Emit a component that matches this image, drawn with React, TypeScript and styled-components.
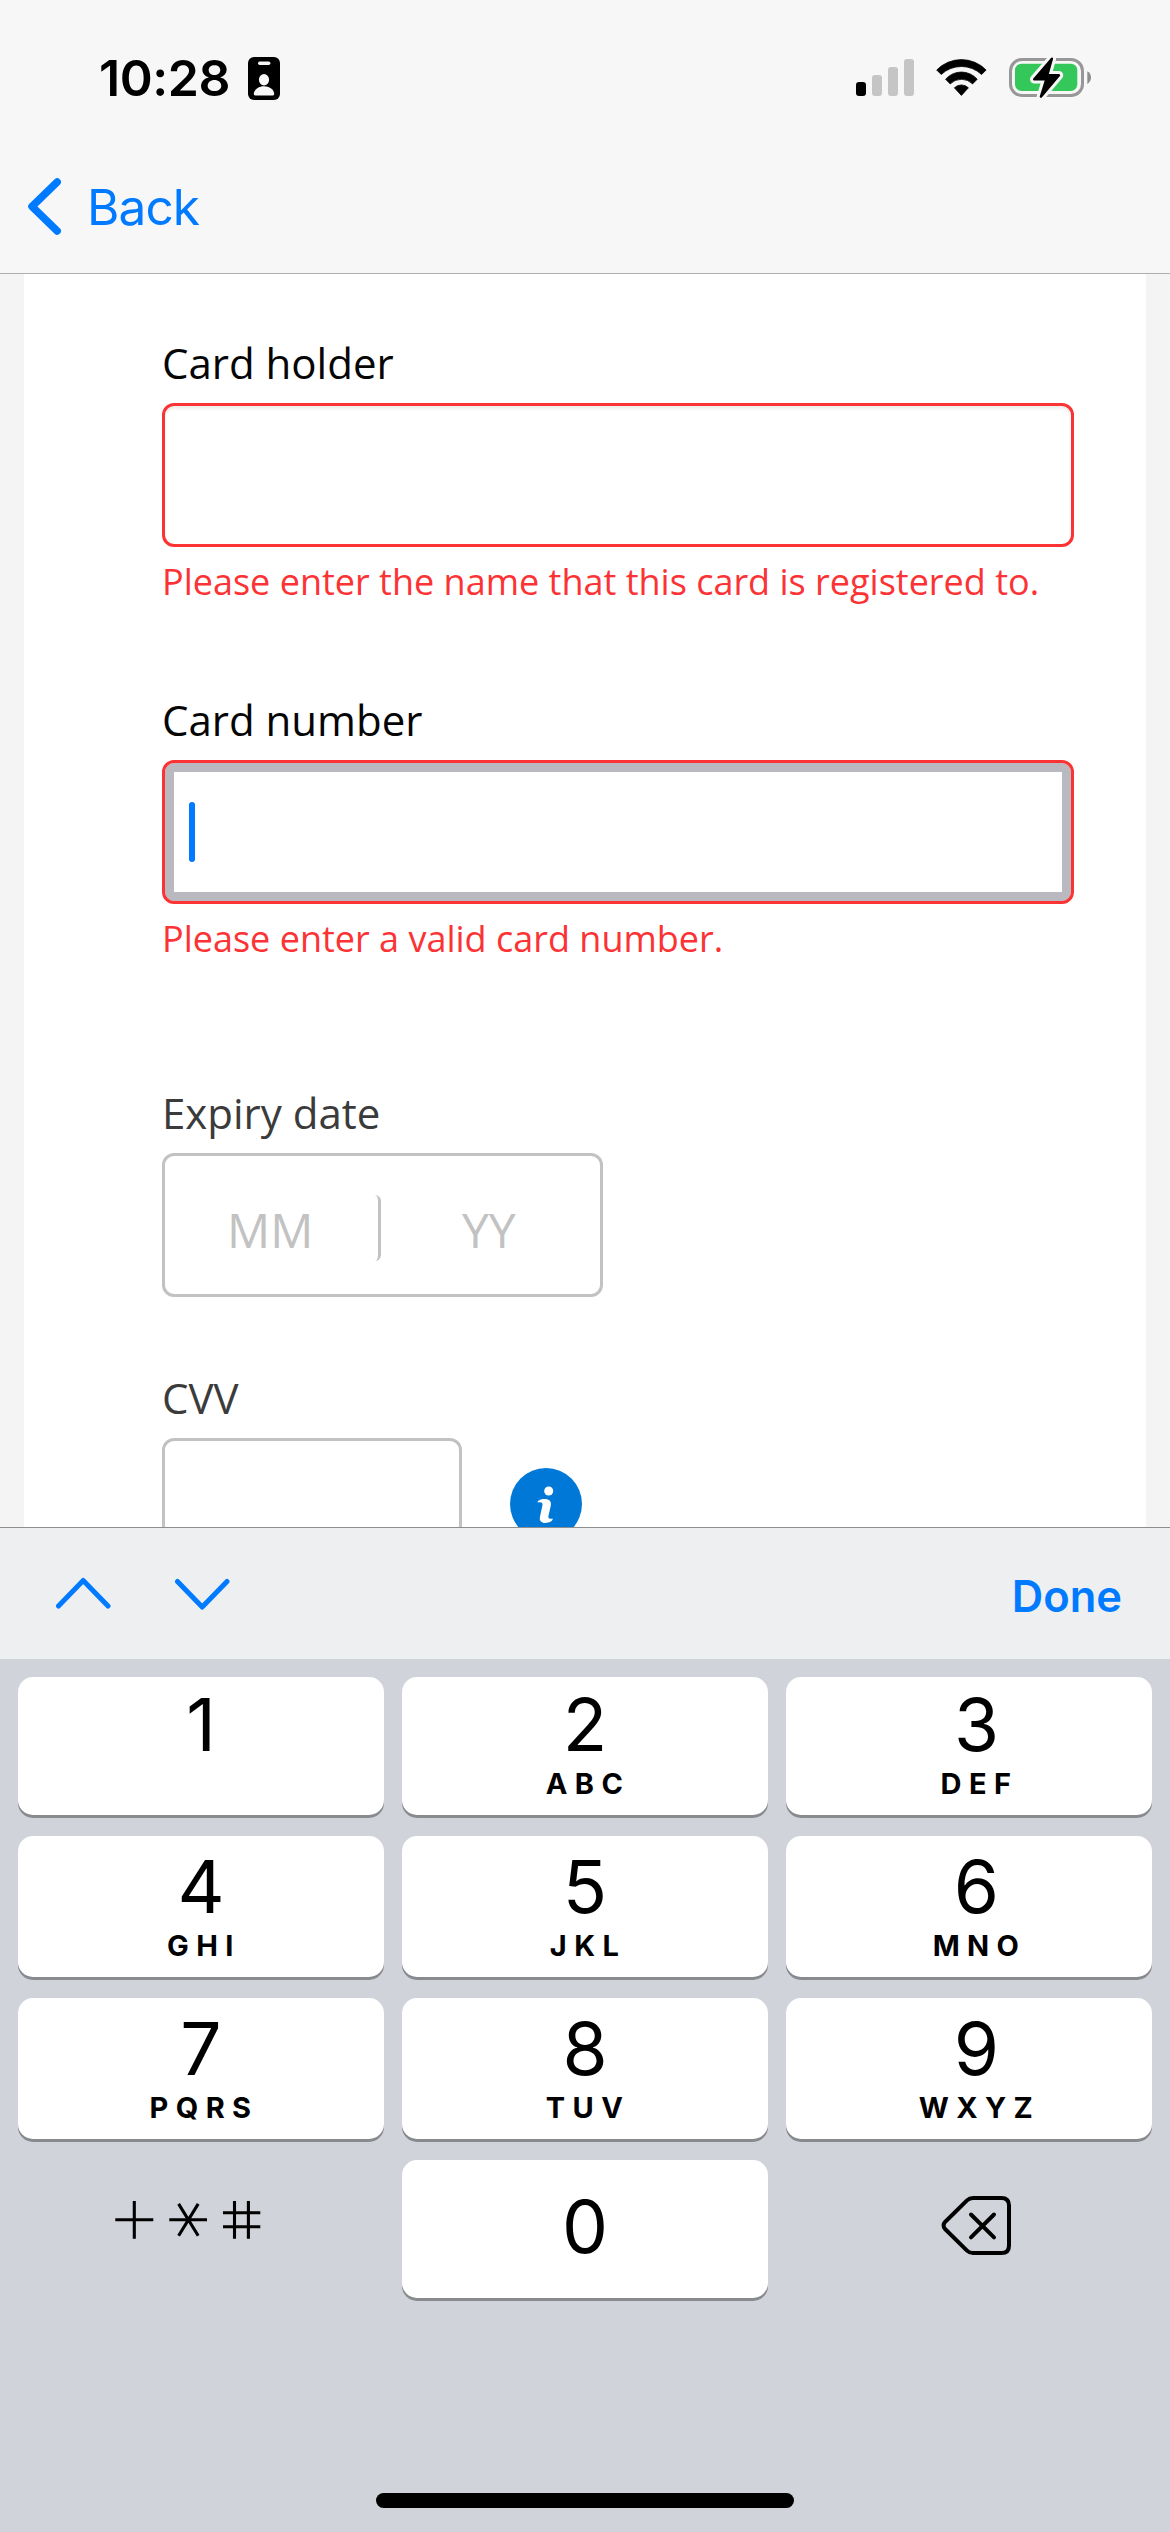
import React from "react";
import styled, { createGlobalStyle } from "styled-components";

const blue = "#007aff";
const red = "#fb3335";
const grey = "#c2c2c2";
const ui = `Inter, Roboto, "Liberation Sans", sans-serif`;

const GlobalStyle = createGlobalStyle`
  * { box-sizing: border-box; }
  html, body { margin: 0; padding: 0; background: #d0d3da; }
  button { border: 0; padding: 0; margin: 0; background: none; font: inherit; color: inherit; }
`;

const Screen = styled.div`
  width: 1170px;
  height: 2532px;
  display: flex;
  flex-direction: column;
  overflow: hidden;
  font-family: ${ui};
  background: #f4f4f4;
`;

const Header = styled.header`
  height: 274px;
  flex: none;
  background: #f7f7f7;
  border-bottom: 1px solid #aeaeaf;
`;

const StatusBar = styled.div`
  display: flex;
  align-items: center;
  height: 108px;
  padding: 48px 79px 0 99px;
`;

const Time = styled.span`
  width: 149px;
  font-size: 50px;
  line-height: 60px;
  font-weight: 600;
  letter-spacing: -0.4px;
  white-space: nowrap;
  color: #000;
`;

const StatusIcons = styled.div`
  display: flex;
  gap: 22px;
  margin-left: auto;
`;

const Icon = styled.svg`
  display: block;
  flex: none;
`;

const NavBar = styled.nav`
  padding: 69px 28px 0;
`;

const BackButton = styled.button`
  display: flex;
  align-items: center;
  gap: 26px;
  font-size: 49.5px;
  line-height: 60px;
  letter-spacing: -0.9px;
  color: ${blue};
`;

const Viewport = styled.main`
  height: 1253px;
  flex: none;
  overflow: hidden;
  padding: 0 24px;
`;

const Sheet = styled.form`
  height: 1400px;
  padding: 61px 72px 0 138px;
  background: #fff;
  font-family: "Open Sans", "Noto Sans", sans-serif;
`;

const Field = styled.div<{ $after: number }>`
  margin-bottom: ${(p) => p.$after}px;
`;

const Label = styled.label<{ $muted?: boolean }>`
  display: block;
  margin-bottom: 12px;
  font-size: 42px;
  line-height: 56px;
  color: ${(p) => (p.$muted ? "#3b3b3b" : "#050505")};
`;

const Box = styled.div<{ $w?: number; $error?: boolean; $focus?: boolean }>`
  display: flex;
  width: ${(p) => (p.$w ? `${p.$w}px` : "100%")};
  height: 144px;
  border: 3px solid ${(p) => (p.$error ? red : grey)};
  border-radius: 12px;
  background: #fff;
  box-shadow: ${(p) =>
    p.$focus
      ? "inset 0 0 0 9px #bbb9c0"
      : p.$error
      ? "inset 0 3px 3px rgba(0, 0, 0, 0.07)"
      : "none"};
`;

const Caret = styled.span`
  width: 6px;
  height: 60px;
  margin: 39px 0 0 24px;
  border-radius: 3px;
  background: ${blue};
`;

const ErrorText = styled.p`
  margin: 11px 0 0;
  font-size: 36px;
  line-height: 48px;
  white-space: nowrap;
  color: ${red};
`;

const DatePart = styled.span<{ $divider?: boolean }>`
  flex: none;
  width: ${(p) => (p.$divider ? 156 : 120)}px;
  height: 66px;
  margin: 39px 0 0 ${(p) => (p.$divider ? 60 : 79)}px;
  padding-left: 2px;
  border-right: ${(p) => (p.$divider ? `3px solid ${grey}` : "0")};
  border-radius: 6px;
  font-size: 48px;
  line-height: 69px;
  color: ${grey};
`;

const CvvRow = styled.div`
  display: flex;
  align-items: flex-start;
  gap: 48px;
`;

const InfoButton = styled.button`
  margin-top: 30px;
`;

const Accessory = styled.div`
  height: 132px;
  flex: none;
  display: flex;
  align-items: center;
  padding: 0 48px 2px 56px;
  gap: 64px;
  border-top: 1px solid #8d8e91;
  background: #eeeff1;
`;

const DoneButton = styled.button`
  margin: 6px 0 0 auto;
  font-size: 43.5px;
  line-height: 54px;
  font-weight: 600;
  color: ${blue};
`;

const Keyboard = styled.section`
  flex: 1;
  display: flex;
  flex-direction: column;
  align-items: center;
  justify-content: space-between;
  padding: 18px 18px 24px;
  background: #d0d3da;
`;

const Keys = styled.div`
  display: grid;
  grid-template-columns: repeat(3, 366px);
  grid-template-rows: 138px 141px 141px 138px;
  gap: 21px 18px;
`;

const Key = styled.button<{ $top: number; $shift?: boolean; $plain?: boolean }>`
  display: flex;
  flex-direction: column;
  align-items: center;
  justify-content: flex-start;
  padding: ${(p) => p.$top}px 0 0 ${(p) => (p.$shift ? 15 : 0)}px;
  border-radius: 15px;
  background: ${(p) => (p.$plain ? "transparent" : "#fff")};
  box-shadow: ${(p) => (p.$plain ? "none" : "0 3px 0 #898a8e")};
  color: #000;
`;

const Digit = styled.span`
  font-size: 73px;
  line-height: 72px;
`;

const Letters = styled.span`
  height: 30px;
  margin-top: 8px;
  padding-left: 6px;
  font-size: 29px;
  line-height: 30px;
  font-weight: 700;
  letter-spacing: 7.4px;
`;

const HomeBar = styled.div`
  width: 418px;
  height: 15px;
  border-radius: 8px;
  background: #000;
`;

const BadgeIcon = () => (
  <Icon width="32" height="60" viewBox="248 48 32 60">
    <rect x="248" y="57" width="32" height="43" rx="6" fill="#000" />
    <rect x="258" y="61.5" width="12.4" height="3.4" rx="1.7" fill="#f7f7f7" />
    <ellipse cx="264" cy="79.7" rx="5.1" ry="5.7" fill="#f7f7f7" />
    <path d="M253.8 93.6c.6-4.4 5-7.3 10.2-7.3s9.600 2.900 10.200 7.300c.1 1.200-.6 2-1.700 2h-17c-1.100 0-1.800-.8-1.700-2z" fill="#f7f7f7" />
  </Icon>
);

const SignalIcon = () => (
  <Icon width="58" height="60" viewBox="856 48 58 60">
    <rect x="856" y="82" width="10" height="14" rx="3" fill="#000" />
    <rect x="872" y="75" width="10" height="21" rx="3" fill="#c5c5c5" />
    <rect x="888" y="67" width="10" height="29" rx="3" fill="#c5c5c5" />
    <rect x="904" y="59" width="10" height="37" rx="3" fill="#c5c5c5" />
  </Icon>
);

const WifiIcon = () => (
  <Icon width="51" height="60" viewBox="936 48 51 60">
    <g stroke="#000" strokeWidth="0.8" strokeLinejoin="round">
      <path d="M936.7 70A34.500 34.500 0 0 1 986.100 70L981.600 74.500A29.500 29.500 0 0 0 941.200 74.500Z" />
      <path d="M945.600 79.200A21 21 0 0 1 977.200 79.200L972.600 83.900A15.800 15.800 0 0 0 950.200 83.900Z" />
      <path d="M954.400 87.800A10 10 0 0 1 968.400 87.800L961.400 95.400Z" />
    </g>
  </Icon>
);

const BatteryIcon = () => (
  <Icon width="82" height="60" viewBox="1009 48 82 60">
    <rect x="1010.500" y="59.500" width="72" height="36" rx="11.500" fill="none" stroke="#979797" strokeWidth="3" />
    <path d="M1087.300 71.300c2.300 1 3.700 3.500 3.700 6.300s-1.400 5.300-3.700 6.300z" fill="#8d8d8d" />
    <rect x="1015" y="63.700" width="62.300" height="27.300" rx="6.500" fill="#34c759" />
    <path
      d="M1051.900 58.700L1034.200 79.300H1046.300L1040.900 96.700L1059 75.300H1047.200Z"
      fill="#f7f7f7"
      stroke="#f7f7f7"
      strokeWidth="8.500"
      strokeLinejoin="round"
    />
    <path
      d="M1051.900 58.700L1034.200 79.300H1046.300L1040.900 96.700L1059 75.300H1047.200Z"
      fill="#000"
      stroke="#000"
      strokeWidth="2.400"
      strokeLinejoin="round"
    />
  </Icon>
);

const Chevron = ({ w, h, d, stroke }: { w: number; h: number; d: string; stroke: number }) => (
  <Icon width={w} height={h} viewBox={`0 0 ${w} ${h}`} fill="none" stroke={blue} strokeWidth={stroke} strokeLinecap="round" strokeLinejoin="round">
    <path d={d} />
  </Icon>
);

const InfoIcon = () => (
  <Icon width="72" height="72" viewBox="510 1468 72 72">
    <circle cx="546" cy="1504" r="36" fill="#0078d7" />
    <circle cx="548.700" cy="1491" r="4.500" fill="#fff" />
    <path
      d="M537.500 1502.500C537.700 1500.500 541 1499 544.500 1499C549.500 1499 551.600 1501.500 550.800 1505.500L548.400 1516.300C548 1518.500 549.200 1519.200 552.800 1518.600C552.500 1521.500 549.200 1523 545.300 1523C541.200 1523 539.200 1520.600 539.900 1517L542.400 1505.500C542.900 1502.700 541.800 1501.800 537.500 1502.500Z"
      fill="#fff"
    />
  </Icon>
);

const SymbolsIcon = () => (
  <Icon width="366" height="138" viewBox="18 2160 366 138" fill="none" stroke="#000" strokeWidth="3.100">
    <path d="M115.300 2219.700H153.300M134.300 2201V2238.700" />
    <path d="M169.300 2219.700H207M178.600 2203.900L198.200 2235.700M198.200 2203.900L178.600 2235.700" />
    <path d="M223 2212.700H260.300M223 2226.700H260.300M234.500 2201V2238.700M248.400 2201V2238.700" />
  </Icon>
);

const BackspaceIcon = () => (
  <Icon width="366" height="138" viewBox="786 2160 366 138" fill="none" stroke="#000" strokeWidth="4" strokeLinecap="round" strokeLinejoin="round">
    <path d="M973 2198H1001.500Q1009 2198 1009 2205.500V2245.500Q1009 2253 1001.500 2253H973Q969.500 2253 967 2250.600L945.300 2229.300Q941.800 2225.500 945.300 2221.700L967 2200.400Q969.500 2198 973 2198Z" />
    <path d="M971 2214.500L994 2237.300M994 2214.500L971 2237.300" />
  </Icon>
);

const keys = [
  ["1", ""],
  ["2", "ABC"],
  ["3", "DEF"],
  ["4", "GHI"],
  ["5", "JKL"],
  ["6", "MNO"],
  ["7", "PQRS"],
  ["8", "TUV"],
  ["9", "WXYZ"],
];

export default function App() {
  return (
    <Screen>
      <GlobalStyle />
      <Header>
        <StatusBar>
          <Time>10:28</Time>
          <BadgeIcon />
          <StatusIcons>
            <SignalIcon />
            <WifiIcon />
            <BatteryIcon />
          </StatusIcons>
        </StatusBar>
        <NavBar>
          <BackButton>
            <Chevron w={33} h={60} stroke={7.5} d="M29.200 5L4 29.500L29.200 54" />
            Back
          </BackButton>
        </NavBar>
      </Header>

      <Viewport>
        <Sheet>
          <Field $after={86}>
            <Label>Card holder</Label>
            <Box $error />
            <ErrorText>Please enter the name that this card is registered to.</ErrorText>
          </Field>
          <Field $after={122}>
            <Label>Card number</Label>
            <Box $error $focus>
              <Caret />
            </Box>
            <ErrorText>Please enter a valid card number.</ErrorText>
          </Field>
          <Field $after={73}>
            <Label $muted>Expiry date</Label>
            <Box $w={441}>
              <DatePart $divider>MM</DatePart>
              <DatePart>YY</DatePart>
            </Box>
          </Field>
          <Field $after={0}>
            <Label $muted>CVV</Label>
            <CvvRow>
              <Box $w={300} />
              <InfoButton type="button" aria-label="About the CVV">
                <InfoIcon />
              </InfoButton>
            </CvvRow>
          </Field>
        </Sheet>
      </Viewport>

      <Accessory>
        <Chevron w={55} h={34} stroke={5} d="M2.500 30L27.200 4.500L52 30" />
        <Chevron w={55} h={34} stroke={5} d="M2.500 5.500L27.200 31L52 5.500" />
        <DoneButton>Done</DoneButton>
      </Accessory>

      <Keyboard>
        <Keys>
          {keys.map(([digit, letters], i) => (
            <Key key={digit} $top={i < 3 ? 12 : 15} $shift={i % 3 === 2}>
              <Digit>{digit}</Digit>
              {letters && <Letters>{letters}</Letters>}
            </Key>
          ))}
          <Key $plain $top={0} aria-label="Symbols">
            <SymbolsIcon />
          </Key>
          <Key $top={31}>
            <Digit>0</Digit>
          </Key>
          <Key $plain $top={0} aria-label="Delete">
            <BackspaceIcon />
          </Key>
        </Keys>
        <HomeBar />
      </Keyboard>
    </Screen>
  );
}
